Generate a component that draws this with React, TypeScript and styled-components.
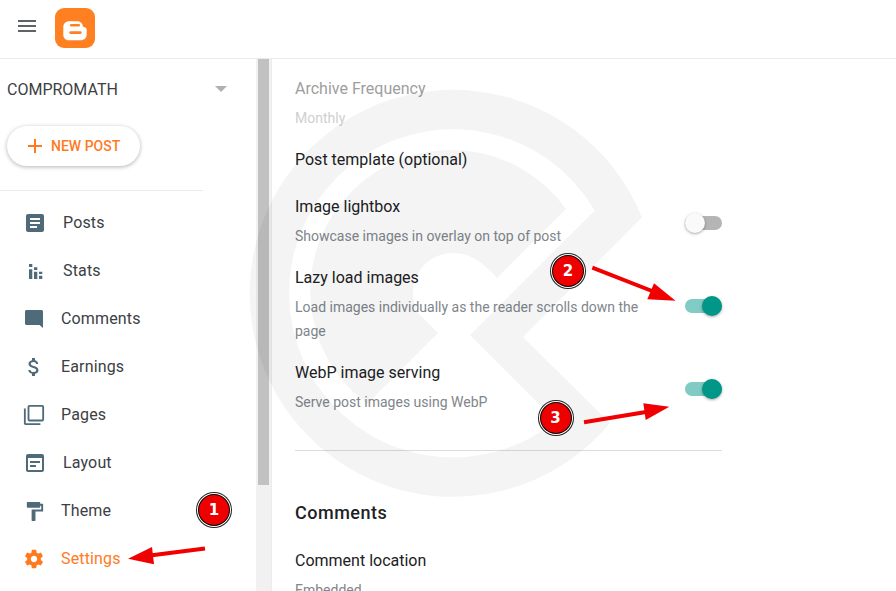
import React from 'react';
import styled, { createGlobalStyle } from 'styled-components';

const GlobalStyle = createGlobalStyle`
    html, body {
        margin: 0;
        padding: 0;
        background: white;
        font-family: Roboto, "Liberation Sans", sans-serif;
    }
`;

const Page = styled.div`
    position: relative;
    width: 896px;
    height: 591px;
    overflow: hidden;
    display: flex;
    flex-direction: column;
`;

const TopBar = styled.header`
    flex: none;
    height: 58px;
    box-sizing: content-box;
    border-bottom: 1px solid #ebebeb;
    display: flex;
    align-items: flex-start;
    padding-left: 15px;
    gap: 16px;
`;

const MenuIcon = styled.svg`
    margin-top: 14px;
    fill: #5f6368;
`;

const LogoIcon = styled.svg`
    margin-top: 8px;
`;

const Body = styled.div`
    flex: 1;
    min-height: 0;
    display: flex;
`;

const Sidebar = styled.aside`
    flex: none;
    width: 256px;
    display: flex;
    flex-direction: column;
`;

const Account = styled.div`
    height: 60px;
    display: flex;
    align-items: center;
    justify-content: space-between;
    padding: 0 29px 0 7px;
    font-size: 16px;
    color: #3c4043;
`;

const Caret = styled.span`
    width: 0;
    height: 0;
    border-left: 6px solid transparent;
    border-right: 6px solid transparent;
    border-top: 6px solid #b0b0b0;
`;

const NewPost = styled.button`
    align-self: flex-start;
    margin: 7px 0 0 7px;
    width: 133px;
    height: 40px;
    border: none;
    border-radius: 20px;
    background: white;
    box-shadow: 0 1px 4px rgba(0, 0, 0, 0.3);
    display: flex;
    align-items: center;
    padding: 0 0 0 19px;
    gap: 7px;
    font-family: inherit;
    font-size: 14px;
    font-weight: 500;
    color: #ff7a1f;
`;

const SideRule = styled.hr`
    flex: none;
    width: 203px;
    height: 1px;
    margin: 24px 0 7px;
    border: none;
    background: #ebebeb;
`;

const NavItem = styled.div<{ $inset: number; $gap: number; $active?: boolean }>`
    flex: none;
    height: 48px;
    display: flex;
    align-items: center;
    padding-left: ${(props) => props.$inset}px;
    gap: ${(props) => props.$gap}px;
    font-size: 16px;
    letter-spacing: 0.15px;
    color: ${(props) => (props.$active ? '#ff7a1f' : '#3c4043')};

    svg {
        flex: none;
        margin-top: 2px;
        fill: ${(props) => (props.$active ? '#ff7a1f' : '#4f6b7a')};
    }
`;

const ScrollTrack = styled.div`
    flex: none;
    width: 16px;
    background: #f1f1f1;
    border-right: 1px solid #ececec;
    box-sizing: border-box;
    padding-left: 2px;
`;

const ScrollThumb = styled.div`
    width: 11px;
    height: 426px;
    background: #c1c1c1;
`;

const Content = styled.main`
    flex: none;
    width: 427px;
    margin-left: 23px;
    padding-top: 17px;
    display: flex;
    flex-direction: column;
`;

const Title = styled.div<{ $disabled?: boolean; $top?: number }>`
    flex: none;
    font-size: 16px;
    line-height: 26px;
    margin-top: ${(props) => props.$top ?? 0}px;
    color: ${(props) => (props.$disabled ? '#9e9e9e' : '#202124')};
`;

const Hint = styled.div<{ $disabled?: boolean }>`
    flex: none;
    font-size: 14px;
    line-height: 24px;
    margin-top: 4px;
    color: ${(props) => (props.$disabled ? '#cfcfcf' : '#80868b')};
`;

const Row = styled.div<{ $top: number }>`
    flex: none;
    display: flex;
    align-items: center;
    justify-content: space-between;
    margin-top: ${(props) => props.$top}px;
`;

const RowText = styled.div`
    width: 350px;
`;

const Toggle = styled.div<{ $on?: boolean }>`
    position: relative;
    flex: none;
    width: 37px;
    height: 14px;
    margin-top: 4px;
    border-radius: 7px;
    background: ${(props) => (props.$on ? '#80cbc4' : '#b5b5b5')};

    &::after {
        content: '';
        position: absolute;
        top: -3px;
        left: ${(props) => (props.$on ? '17px' : '0')};
        width: 20px;
        height: 20px;
        border-radius: 50%;
        background: ${(props) => (props.$on ? '#009688' : '#fafafa')};
        box-shadow: 0 1px 3px rgba(0, 0, 0, 0.35);
    }
`;

const ContentRule = styled.hr`
    flex: none;
    width: 100%;
    height: 1px;
    margin: 36px 0 0;
    border: none;
    background: #dadce0;
`;

const SectionTitle = styled.h2`
    flex: none;
    margin: 50px 0 0;
    font-size: 18px;
    line-height: 24px;
    font-weight: 500;
    letter-spacing: 0.5px;
    color: #202124;
`;

const Watermark = styled.svg`
    position: absolute;
    top: 0;
    left: 0;
    pointer-events: none;
    fill: rgba(0, 0, 0, 0.045);
`;

const Arrows = styled.svg`
    position: absolute;
    top: 0;
    left: 0;
    pointer-events: none;
`;

const Badge = styled.div<{ $x: number; $y: number }>`
    position: absolute;
    left: ${(props) => props.$x - 15}px;
    top: ${(props) => props.$y - 15}px;
    width: 30px;
    height: 30px;
    border-radius: 50%;
    background: #ee0000;
    box-shadow: 0 0 0 1px black, 0 0 0 2px white, 0 0 0 3px #222;
    display: flex;
    align-items: center;
    justify-content: center;
    font-family: "DejaVu Sans", sans-serif;
    font-size: 15px;
    font-weight: 700;
    color: white;
`;

const icons: Record<string, React.ReactNode> = {
    posts: <path d="M19 3H5c-1.1 0-2 .9-2 2v14c0 1.1.9 2 2 2h14c1.1 0 2-.9 2-2V5c0-1.1-.9-2-2-2zm-5 14H7v-2h7v2zm3-4H7v-2h10v2zm0-4H7V7h10v2z" />,
    stats: (
        <path d="M6 5h3.300v3H6zM6 10.300h3.300V20H6zM11 8.300h3.300V11H11zM11 12.700h3.300V20H11zM16 12.700h3.300V15H16zM16 16.700h3.300V20H16z" />
    ),
    comments: <path d="M19.500 3h-15C3.700 3 3 3.700 3 4.500v12c0 .8.7 1.500 1.500 1.500H17.500l3.500 3V4.500C21 3.700 20.300 3 19.500 3z" />,
    earnings: <path d="M11.8 10.9c-2.27-.59-3-1.2-3-2.15 0-1.09 1.01-1.85 2.7-1.85 1.78 0 2.44.85 2.5 2.1h2.21c-.07-1.72-1.12-3.3-3.21-3.81V3h-3v2.16c-1.94.42-3.5 1.68-3.5 3.61 0 2.31 1.91 3.46 4.7 4.13 2.5.6 3 1.48 3 2.41 0 .69-.49 1.79-2.7 1.79-2.06 0-2.87-.92-2.98-2.1h-2.2c.12 2.19 1.76 3.42 3.68 3.83V21h3v-2.15c1.95-.37 3.5-1.5 3.5-3.55 0-2.84-2.43-3.81-4.7-4.4z" />,
    pages: <path d="M3 5H1v16c0 1.1.9 2 2 2h16v-2H3V5zm18-4H7c-1.1 0-2 .9-2 2v14c0 1.1.9 2 2 2h14c1.1 0 2-.9 2-2V3c0-1.1-.9-2-2-2zm0 16H7V3h14v14z" />,
    layout: <path fillRule="evenodd" d="M19 3H5c-1.1 0-2 .9-2 2v14c0 1.1.9 2 2 2h14c1.1 0 2-.9 2-2V5c0-1.1-.9-2-2-2zm0 16H5V7h14v12zM7 10h10v2H7zm0 4h6v2H7z" />,
    theme: <path d="M18 4V3c0-.55-.45-1-1-1H5c-.55 0-1 .45-1 1v4c0 .55.45 1 1 1h12c.55 0 1-.45 1-1V6h1v4H9v11c0 .55.45 1 1 1h2c.55 0 1-.45 1-1v-9h8V4h-3z" />,
    settings: <path d="M19.43 12.98c.04-.32.07-.64.07-.98s-.03-.66-.07-.98l2.11-1.65c.19-.15.24-.42.12-.64l-2-3.46c-.12-.22-.39-.3-.61-.22l-2.49 1c-.52-.4-1.08-.73-1.69-.98l-.38-2.65C14.46 2.18 14.25 2 14 2h-4c-.25 0-.46.18-.49.42l-.38 2.65c-.61.25-1.17.59-1.69.98l-2.49-1c-.23-.09-.49 0-.61.22l-2 3.46c-.13.22-.07.49.12.64l2.11 1.65c-.04.32-.07.65-.07.98s.03.66.07.98l-2.11 1.65c-.19.15-.24.42-.12.64l2 3.46c.12.22.39.3.61.22l2.49-1c.52.4 1.08.73 1.69.98l.38 2.65c.03.24.24.42.49.42h4c.25 0 .46-.18.49-.42l.38-2.65c.61-.25 1.17-.59 1.69-.98l2.49 1c.23.09.49 0 .61-.22l2-3.46c.12-.22.07-.49-.12-.64l-2.11-1.65zM12 15.5c-1.93 0-3.5-1.57-3.5-3.5s1.57-3.5 3.5-3.5 3.5 1.57 3.5 3.5-1.57 3.5-3.5 3.5z" />,
};

const navItems = [
    { key: 'posts', label: 'Posts', inset: 23, gap: 16, size: 24 },
    { key: 'stats', label: 'Stats', inset: 23, gap: 16, size: 24 },
    { key: 'comments', label: 'Comments', inset: 22, gap: 15, size: 24 },
    { key: 'earnings', label: 'Earnings', inset: 22, gap: 15, size: 24 },
    { key: 'pages', label: 'Pages', inset: 23, gap: 16, size: 22 },
    { key: 'layout', label: 'Layout', inset: 23, gap: 16, size: 24 },
    { key: 'theme', label: 'Theme', inset: 23, gap: 15, size: 23 },
    { key: 'settings', label: 'Settings', inset: 23, gap: 16, size: 22, active: true },
];

function BloggerLogo() {
    return (
        <LogoIcon width="40" height="40" viewBox="0 0 40 40">
            <rect width="40" height="40" rx="9" fill="#ff8020" />
            <path
                fill="white"
                d="M14 13.300h8c3 0 5.500 2 5.800 4.500.1.9.7 1.400 1.500 1.500 1.400.1 2.400 1 2.400 2.500v4.700c0 3.300-2.500 5.800-5.800 5.800H13.500c-3 0-5.200-2.400-5.200-5.500V18.800c0-3 2.500-5.500 5.700-5.500z"
            />
            <rect x="15" y="16" width="10" height="2.500" rx="1.200" fill="#ff8020" />
            <rect x="14.300" y="23.300" width="12.400" height="2.600" rx="1.300" fill="#ff8020" />
        </LogoIcon>
    );
}

function Arrow({ d, head }: { d: string; head: string }) {
    return (
        <>
            <path d={d} stroke="#f00000" strokeWidth="4" fill="none" />
            <polygon points={head} fill="#f00000" />
        </>
    );
}

function App() {
    return (
        <Page>
            <GlobalStyle />
            <TopBar>
                <MenuIcon width="24" height="24" viewBox="0 0 24 24">
                    <path d="M3 18h18v-2H3v2zm0-5h18v-2H3v2zm0-7v2h18V6H3z" />
                </MenuIcon>
                <BloggerLogo />
            </TopBar>
            <Body>
                <Sidebar>
                    <Account>
                        COMPROMATH
                        <Caret />
                    </Account>
                    <NewPost>
                        <svg width="18" height="18" viewBox="0 0 18 18" fill="#ff7a1f">
                            <path d="M8 2h2v6h6v2h-6v6H8v-6H2V8h6z" />
                        </svg>
                        NEW POST
                    </NewPost>
                    <SideRule />
                    {navItems.map((item) => (
                        <NavItem key={item.key} $inset={item.inset} $gap={item.gap} $active={item.active}>
                            <svg width={item.size} height={item.size} viewBox="0 0 24 24">
                                {icons[item.key]}
                            </svg>
                            {item.label}
                        </NavItem>
                    ))}
                </Sidebar>
                <ScrollTrack>
                    <ScrollThumb />
                </ScrollTrack>
                <Content>
                    <Title $disabled>Archive Frequency</Title>
                    <Hint $disabled>Monthly</Hint>
                    <Title $top={17}>Post template (optional)</Title>
                    <Row $top={21}>
                        <RowText>
                            <Title>Image lightbox</Title>
                            <Hint>Showcase images in overlay on top of post</Hint>
                        </RowText>
                        <Toggle />
                    </Row>
                    <Row $top={17}>
                        <RowText>
                            <Title>Lazy load images</Title>
                            <Hint>Load images individually as the reader scrolls down the page</Hint>
                        </RowText>
                        <Toggle $on />
                    </Row>
                    <Row $top={17}>
                        <RowText>
                            <Title>WebP image serving</Title>
                            <Hint>Serve post images using WebP</Hint>
                        </RowText>
                        <Toggle $on />
                    </Row>
                    <ContentRule />
                    <SectionTitle>Comments</SectionTitle>
                    <Title $top={23}>Comment location</Title>
                    <Hint>Embedded</Hint>
                </Content>
            </Body>
            <Watermark width="896" height="591" viewBox="0 0 896 591">
                <path
                    fillRule="evenodd"
                    d="M642 217.500A203.500 203.500 0 1 0 610 423L523 337ZM594.600 210.400A164 164 0 1 0 556 421L470 335Z"
                />
                <path d="M566 209A141 141 0 1 0 367 404L438 333L419 314A40 40 0 0 1 453 253C472 253 484 264 497 278Z" />
            </Watermark>
            <Arrows width="896" height="591" viewBox="0 0 896 591">
                <Arrow d="M205 548.500L150 555.500" head="128,558.700 152,547 154,564.300" />
                <Arrow d="M592.300 267.700L652 291" head="675.500,300.700 654,283.300 647.300,299.300" />
                <Arrow d="M584 422.300L646 412" head="669.300,406.700 643.300,403.300 645.700,420" />
            </Arrows>
            <Badge $x={214} $y={510}>1</Badge>
            <Badge $x={568} $y={271}>2</Badge>
            <Badge $x={555.5} $y={418}>3</Badge>
        </Page>
    );
}

export default App;
